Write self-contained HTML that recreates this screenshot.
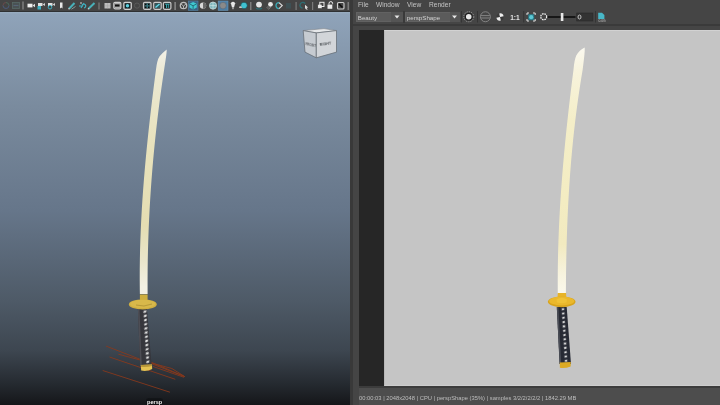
<!DOCTYPE html>
<html><head><meta charset="utf-8">
<style>
*{margin:0;padding:0;box-sizing:border-box}
body *{will-change:transform}
html,body{width:720px;height:405px;overflow:hidden;background:#454545;font-family:"Liberation Sans",sans-serif}
.abs{position:absolute}
#tb{left:0;top:0;width:350px;height:12px;background:#444;border-bottom:1.5px solid #2f3133}
#vp{left:0;top:11.5px;width:350px;height:394px;overflow:hidden;
background:linear-gradient(to bottom,#9aaec2 0px,#8fa3b9 2px,#7a8b9e 94px,#66768a 199px,#4e5a67 289px,#3d4650 339px,#252a30 372px,#141518 394px)}
#div{left:350px;top:0;width:2.5px;height:405px;background:#393939}
#rp{left:352.5px;top:0;width:368px;height:405px;background:#454545}
.menu{top:-0.5px;height:10px;font-size:6.6px;color:#c4c4c4;line-height:9px}
#img{left:384px;top:30px;width:336px;height:356px;background:#c5c5c5;border-top:1px solid #d2d2d2;border-left:1px solid #b8b8b8;border-bottom:1px solid #cdcdcd}
#dark{left:359px;top:30px;width:25px;height:356px;background:#262626}
#status{left:359px;top:386px;width:361px;height:19px;background:#4d4d4d;border-top:2px solid #3c3c3c}
#stxt{left:359px;top:394.5px;font-size:5.8px;color:#bdbdbd;white-space:nowrap;line-height:7px}
.dd{top:11.75px;height:10px;background:#5b5b5b;border:1px solid #626262}
.ddt{font-size:6.2px;color:#d2d2d2;line-height:8px;padding-left:0.8px;padding-top:1px;white-space:nowrap}
.dda{top:11.75px;height:10px;background:#545454}
</style></head><body>
<div id="tb" class="abs"></div>
<div id="vp" class="abs"></div>
<div id="div" class="abs"></div>
<div id="rp" class="abs"></div>
<div class="abs" style="left:352.5px;top:23.5px;width:368px;height:2px;background:#3a3a3a"></div>
<div class="abs menu" style="left:358px">File</div>
<div class="abs menu" style="left:376px">Window</div>
<div class="abs menu" style="left:407px">View</div>
<div class="abs menu" style="left:429px">Render</div>
<!-- dropdowns -->
<div class="abs dd" style="left:356px;width:47px"><div class="ddt">Beauty</div></div>
<div class="abs dda" style="left:391px;width:11.5px"></div>
<div class="abs" style="left:402.75px;top:11px;width:2px;height:12px;background:#3a3a3a"></div>
<div class="abs dd" style="left:405px;width:55px"><div class="ddt">perspShape</div></div>
<div class="abs dda" style="left:449.5px;width:10px"></div>
<div id="dark" class="abs"></div>
<div id="img" class="abs"></div>
<div id="status" class="abs"></div>
<div id="stxt" class="abs">00:00:03 | 2048x2048 | CPU | perspShape (35%) | samples 3/2/2/2/2/2 | 1842.29 MB</div>

<svg class="abs" style="left:0;top:0" width="720" height="405" viewBox="0 0 720 405">
<defs>
<linearGradient id="vblade" x1="0" y1="0" x2="0" y2="1">
<stop offset="0" stop-color="#f2f1e8"/><stop offset="0.1" stop-color="#ebe8d2"/><stop offset="0.4" stop-color="#e8e2bc"/><stop offset="0.72" stop-color="#e4ddb2"/><stop offset="0.86" stop-color="#e9e5ca"/><stop offset="0.97" stop-color="#f3f1e4"/><stop offset="1" stop-color="#f3f1e4"/>
</linearGradient>
<linearGradient id="rblade" x1="0" y1="0" x2="0" y2="1">
<stop offset="0" stop-color="#fbf9f0"/><stop offset="0.1" stop-color="#f7f3dc"/><stop offset="0.3" stop-color="#f4eec8"/><stop offset="0.62" stop-color="#f3ecc2"/><stop offset="0.8" stop-color="#f2eac0"/><stop offset="0.92" stop-color="#f7f3de"/><stop offset="1" stop-color="#fbf9ec"/>
</linearGradient>
</defs>
<!-- ===== left toolbar icons ===== -->
<g fill="none" stroke-width="1">
<path d="M3,5.5 A3,3 0 0 1 6,2.5" stroke="#6a4a4a"/><path d="M6,2.5 A3,3 0 0 1 9,5.5" stroke="#4a6a5a"/><path d="M9,5.5 A3,3 0 0 1 3,5.5" stroke="#4a5a7a"/>
<rect x="12.5" y="2.5" width="7" height="6" fill="#4a5254" stroke="#586a68" stroke-width="0.8"/><path d="M13.5,5.5 H18.5" stroke="#5a6a80" stroke-width="0.8"/>
<rect x="22.5" y="1.5" width="1" height="8" fill="#9a9a9a" stroke="none"/>
<!-- cameras -->
<rect x="27.5" y="3.7" width="5" height="3.7" fill="#f0f0f0" stroke="none"/>
<path d="M32.5,5.5 L35,3.8 L35,7.2 Z" fill="#e0e0e0" stroke="none"/>
<rect x="38" y="3" width="4.5" height="3" fill="#e0e0e0" stroke="none"/>
<path d="M42.5,4.5 L45,3 L45,6 Z" fill="#d0d0d0" stroke="none"/>
<rect x="37.5" y="6" width="3.5" height="3.5" fill="#3fb0c0" stroke="none"/>
<rect x="48" y="3" width="4.5" height="3" fill="#e0e0e0" stroke="none"/>
<path d="M52.5,4.5 L55,3 L55,6 Z" fill="#d0d0d0" stroke="none"/>
<circle cx="50" cy="7.2" r="1.8" stroke="#3fb0c0"/>
<path d="M60,2.5 L62.5,2.5 L62.5,8.5 L61.25,7.5 L60,8.5 Z" fill="#e8e8e8" stroke="none"/>
<!-- pens -->
<path d="M69,8.8 L74.5,3" stroke="#48b0b8" stroke-width="2"/><circle cx="69" cy="8.8" r="0.8" fill="#ccc" stroke="none"/>
<path d="M71.5,9.2 L75.5,6.5" stroke="#8aa0a0" stroke-width="0.9"/>
<path d="M79,6 L83,6 M84,3 L81,8 M82,5 A2,2 0 1 1 84,8" stroke="#3fb0c0" stroke-width="1.2"/>
<circle cx="81" cy="3" r="0.8" fill="#e0e0e0" stroke="none"/>
<path d="M88.5,8.8 L94.5,3" stroke="#48b0b8" stroke-width="2"/><circle cx="88.5" cy="8.8" r="0.8" fill="#ccc" stroke="none"/>
<rect x="98.5" y="2.5" width="1" height="7" fill="#888" stroke="none"/>
<!-- grid & frames -->
<rect x="104.5" y="3" width="6" height="5.5" fill="#bdbdbd" stroke="none"/>
<path d="M107.5,3 V8.5 M104.5,5.75 H110.5" stroke="#a0a0a0" stroke-width="0.4"/>
<rect x="113.8" y="2.3" width="7" height="6.5" rx="1.2" stroke="#cfcfcf" stroke-width="1.2"/>
<rect x="114.5" y="3" width="5.6" height="5" fill="#b0b0b0" stroke="none"/><rect x="115" y="4.4" width="4.6" height="2.2" fill="#111" stroke="none"/>
<rect x="123.8" y="2.3" width="7.5" height="7" rx="1.2" stroke="#cfcfcf" stroke-width="1.2"/>
<rect x="125" y="3.5" width="5" height="4.6" fill="#0c2428" stroke="none"/>
<circle cx="127.5" cy="5.8" r="1.7" fill="#5fd0e0" stroke="none"/>
<circle cx="137" cy="5.6" r="2.6" stroke="#5a5a5a" stroke-width="1"/>
<rect x="143.5" y="2.3" width="7.5" height="7" rx="1.2" stroke="#c8c8c8" stroke-width="1.2"/>
<rect x="144.8" y="3.5" width="5" height="4.6" fill="#3a7880" stroke="none"/>
<path d="M145,3.7 h1.5 v1.5 h-1.5z M148,3.7 h1.5 v1.5 h-1.5z M145,6.5 h1.5 v1.5 h-1.5z M148,6.5 h1.5 v1.5 h-1.5z" fill="#0a0a0a" stroke="none"/>
<rect x="153.7" y="2.3" width="7.5" height="7" rx="1.2" stroke="#c8c8c8" stroke-width="1.2"/>
<rect x="154.9" y="3.5" width="5" height="4.6" fill="#2a5a60" stroke="none"/>
<path d="M155.5,7.5 L159.5,4" stroke="#6ad8e8" stroke-width="1.3"/>
<rect x="163.4" y="2.3" width="7.5" height="7" rx="1.2" stroke="#c8c8c8" stroke-width="1.2"/>
<rect x="164.6" y="3.5" width="5" height="4.6" fill="#0a1a1c" stroke="none"/>
<path d="M165,4.2 H169.5 M166.5,4.2 V8 M168.3,4.2 V8" stroke="#40b0b8" stroke-width="0.9"/>
<rect x="174.5" y="2" width="1.2" height="8" fill="#9a9a9a" stroke="none"/>
<!-- shading -->
<circle cx="183.5" cy="5.5" r="3.2" stroke="#bcbcbc" stroke-width="1.3"/>
<path d="M181,4 L183.5,6 L186,4 M183.5,6 V8.6" stroke="#bcbcbc" stroke-width="0.9"/>
<rect x="188.3" y="1" width="9.7" height="9.3" fill="#3b6283" stroke="#5486ab" stroke-width="0.6"/>
<path d="M193.1,2 L196.8,3.8 L196.8,7.6 L193.1,9.4 L189.4,7.6 L189.4,3.8 Z" fill="#3fc8d0" stroke="none"/>
<path d="M189.6,3.9 L193.1,5.8 L196.6,3.9 M193.1,5.8 V9.2" stroke="#1a4a58" stroke-width="0.7"/>
<circle cx="203" cy="5.6" r="3.2" fill="#d8d8d8" stroke="none"/>
<path d="M203,2.4 A3.2,3.2 0 0 1 203,8.8 Z" fill="#6a6a6a" stroke="none"/>
<circle cx="213" cy="5.6" r="3.6" fill="#7fb8bf" stroke="#c8d8da" stroke-width="0.8"/>
<path d="M209.5,5.6 H216.5 M213,2 V9.2" stroke="#d8e8ea" stroke-width="0.6"/>
<rect x="218.2" y="1" width="9.8" height="9.3" fill="#4d7ea4" stroke="#6896bb" stroke-width="0.6"/>
<circle cx="223" cy="5.6" r="3.3" fill="#8a8a8a" stroke="#5a6a7a" stroke-width="0.6"/>
<!-- light bulb -->
<path d="M231.2,4.5 A2,2 0 1 1 234.8,4.5 L234,7.5 L232,7.5 Z" fill="#e8e8e8" stroke="none"/>
<rect x="232.2" y="7.8" width="1.6" height="1.4" fill="#aaa" stroke="none"/>
<path d="M229.8,3 L230.6,3.6 M236.2,3 L235.4,3.6" stroke="#bbb" stroke-width="0.6"/>
<circle cx="244" cy="5.5" r="3.3" fill="#3fc0d0" stroke="#1a3a40" stroke-width="0.6"/>
<ellipse cx="240.5" cy="7.2" rx="1.5" ry="0.9" fill="#c8c8c8" stroke="none"/>
<rect x="250.2" y="2" width="1.2" height="8" fill="#8a8a8a" stroke="none"/>
<circle cx="259" cy="4.6" r="2.9" fill="#e4e4e4" stroke="none"/>
<path d="M256,8.2 Q259,9.8 262,8.2" stroke="#2a7078" stroke-width="1.1"/>
<path d="M266.5,8 L269,5.5 M267.5,9 L270,6.5 M268.5,9.6 L271,7" stroke="#7a7a7a" stroke-width="0.9"/>
<circle cx="270.5" cy="4.3" r="2.4" fill="#e8e8e8" stroke="none"/>
<path d="M279,2.6 A3,3 0 0 0 279,8.6" stroke="#3aa8b4" stroke-width="1.3"/>
<path d="M279,2.6 L282.2,5.6 L279,8.6" stroke="#d8d8d8" stroke-width="1.2"/>
<rect x="286" y="3" width="5" height="5.5" fill="#3e5054" stroke="none"/>
<rect x="295.5" y="2" width="1.2" height="8" fill="#7a7a7a" stroke="none"/>
<path d="M305.2,3.6 A2.9,2.9 0 1 0 302.6,8.2" stroke="#2e6e74" stroke-width="1.3"/>
<path d="M305,4.8 L308.2,7.6 L306.6,7.8 L307.6,9.6 L306.8,9.9 L305.8,8.2 L305,9.2 Z" fill="#e0e0e0" stroke="none"/>
<rect x="312" y="2" width="1.2" height="8" fill="#7a7a7a" stroke="none"/>
<rect x="317.8" y="4.3" width="4.2" height="4.2" fill="#ececec" stroke="#333" stroke-width="0.5"/>
<rect x="319.8" y="2.3" width="4.2" height="4.2" stroke="#ececec" stroke-width="1"/>
<rect x="327.5" y="4.6" width="4.8" height="4.2" fill="#ececec" stroke="none"/>
<path d="M329,4.6 V3.4 A1.8,1.8 0 0 1 332.6,3.4 V4.2" stroke="#ececec" stroke-width="1"/>
<rect x="337.5" y="2.5" width="6.5" height="6.5" rx="1" stroke="#cfcfcf" stroke-width="1.1"/>
<path d="M339,4 L342.5,7.5" stroke="#0a0a0a" stroke-width="1.6"/>
<rect x="347.6" y="2" width="1.2" height="8" fill="#8a8a8a" stroke="none"/>
</g>

<!-- ===== view cube ===== -->
<g>
<path d="M303.2,30.6 L316.3,32.9 L336.5,30.6 L324,28.6 Z" fill="#e6e8ea" stroke="#7a8086" stroke-width="0.6"/>
<path d="M303.2,30.6 L316.3,32.9 L316.3,57.8 L305,52.1 Z" fill="#c6cbd1" stroke="#60676e" stroke-width="0.7"/>
<path d="M316.3,32.9 L336.5,30.6 L336.5,52.1 L316.3,57.8 Z" fill="#d2d5d9" stroke="#60676e" stroke-width="0.7"/>
<text x="305.4" y="45.8" font-size="3.1" fill="#5a5e63" font-family="Liberation Sans" font-weight="bold" transform="rotate(12 310 44)">FRONT</text>
<text x="319.8" y="45.4" font-size="3.7" fill="#4e5256" font-family="Liberation Sans" font-weight="bold" transform="rotate(-8 327 45)">RIGHT</text>
</g>

<!-- ===== viewport sword ===== -->
<g>
<g stroke="#8c3a1c" stroke-width="0.9" fill="none" opacity="0.95">
<path d="M106.1,346.1 L184.8,376.6"/>
<path d="M118.3,354.2 L171.9,368.5 L184.8,376.6"/>
<path d="M109.5,357 L175.3,379.3"/>
<path d="M102.7,370.5 L169.9,392.2"/>
<path d="M151.6,362.4 L184.8,376.6"/>
<path d="M153,366.5 L184,377.3"/>
</g>
<path d="M166.7,49.4 Q162.6,52.6 159.6,56.2 Q157,60 155.92,70 L155.92,70.00 L154.62,80.00 L153.35,90.00 L152.12,100.00 L150.92,110.00 L149.77,120.00 L148.65,130.00 L147.59,140.00 L146.58,150.00 L145.62,160.00 L144.72,170.00 L143.88,180.00 L143.11,190.00 L142.40,200.00 L141.78,210.00 L141.22,220.00 L140.75,230.00 L140.36,240.00 L140.06,250.00 L139.86,260.00 L139.74,270.00 L139.73,280.00 L139.82,290.00 L139.88,294.00 L147.62,294.00 L147.60,290.00 L147.58,280.00 L147.65,270.00 L147.78,260.00 L147.99,250.00 L148.28,240.00 L148.64,230.00 L149.07,220.00 L149.57,210.00 L150.15,200.00 L150.80,190.00 L151.52,180.00 L152.31,170.00 L153.17,160.00 L154.10,150.00 L155.11,140.00 L156.18,130.00 L157.32,120.00 L158.53,110.00 L159.81,100.00 L161.16,90.00 L162.58,80.00 L164.06,70.00 Q165.6,60 166.3,55 Q166.8,51 166.7,49.4 Z" fill="url(#vblade)"/>
<path d="M139.9,294.5 L147.6,294.5 L147.6,300 L139.9,300 Z" fill="#cdae3e"/>
<path d="M137.9,309 L147,309 L151.6,366 L140.2,366 Z" fill="#36363c"/>
<path d="M137.9,309 L139.5,309 L141.8,366 L140.2,366 Z" fill="#4e4e55"/>
<g fill="#e6e6e6"><ellipse cx="144.98" cy="311.70" rx="1.75" ry="1.1" transform="rotate(-30 144.98 311.70)"/><ellipse cx="145.22" cy="315.88" rx="1.75" ry="1.1" transform="rotate(-30 145.22 315.88)"/><ellipse cx="145.45" cy="320.05" rx="1.75" ry="1.1" transform="rotate(-30 145.45 320.05)"/><ellipse cx="145.68" cy="324.23" rx="1.75" ry="1.1" transform="rotate(-30 145.68 324.23)"/><ellipse cx="145.92" cy="328.40" rx="1.75" ry="1.1" transform="rotate(-30 145.92 328.40)"/><ellipse cx="146.15" cy="332.57" rx="1.75" ry="1.1" transform="rotate(-30 146.15 332.57)"/><ellipse cx="146.39" cy="336.75" rx="1.75" ry="1.1" transform="rotate(-30 146.39 336.75)"/><ellipse cx="146.62" cy="340.93" rx="1.75" ry="1.1" transform="rotate(-30 146.62 340.93)"/><ellipse cx="146.85" cy="345.10" rx="1.75" ry="1.1" transform="rotate(-30 146.85 345.10)"/><ellipse cx="147.09" cy="349.27" rx="1.75" ry="1.1" transform="rotate(-30 147.09 349.27)"/><ellipse cx="147.32" cy="353.45" rx="1.75" ry="1.1" transform="rotate(-30 147.32 353.45)"/><ellipse cx="147.56" cy="357.62" rx="1.75" ry="1.1" transform="rotate(-30 147.56 357.62)"/><ellipse cx="147.79" cy="361.80" rx="1.75" ry="1.1" transform="rotate(-30 147.79 361.80)"/></g>
<ellipse cx="142.8" cy="304.4" rx="13.9" ry="5" fill="#cfae40"/>
<ellipse cx="142.8" cy="303.9" rx="12.6" ry="4.2" fill="#d8b84a"/>
<path d="M136,305 Q144,307.5 152,304" stroke="#a0842e" stroke-width="0.6" fill="none"/>
<path d="M140.8,365 L152,364.5 L152.2,369 Q147,371.8 141.2,370.6 Z" fill="#e4c152"/>
<path d="M140.8,365 L152,364.5 L152.1,366 Q147,367.4 140.9,366.8 Z" fill="#b89638"/>
<rect x="146" y="398.3" width="17" height="8" rx="2.5" fill="#111316"/>
<text x="147" y="404" font-size="5.6" font-weight="bold" fill="#f4f4f4" font-family="Liberation Sans" stroke="#111" stroke-width="0.3" paint-order="stroke">persp</text>
</g>
<!-- ===== render sword ===== -->
<g>
<path d="M584.7,47.4 Q579.2,50.2 576.4,55.2 Q574.2,60 573.46,70 L573.46,70.00 L572.19,80.00 L570.95,90.00 L569.75,100.00 L568.60,110.00 L567.49,120.00 L566.42,130.00 L565.40,140.00 L564.44,150.00 L563.52,160.00 L562.67,170.00 L561.87,180.00 L561.13,190.00 L560.46,200.00 L559.86,210.00 L559.32,220.00 L558.86,230.00 L558.47,240.00 L558.16,250.00 L557.93,260.00 L557.78,270.00 L557.72,280.00 L557.74,290.00 L557.77,293.50 L565.90,293.50 L565.91,290.00 L565.98,280.00 L566.10,270.00 L566.27,260.00 L566.48,250.00 L566.75,240.00 L567.08,230.00 L567.47,220.00 L567.92,210.00 L568.44,200.00 L569.03,190.00 L569.68,180.00 L570.42,170.00 L571.23,160.00 L572.13,150.00 L573.11,140.00 L574.18,130.00 L575.34,120.00 L576.59,110.00 L577.94,100.00 L579.40,90.00 L580.95,80.00 L582.61,70.00 Q583.9,60 584.4,55 Q584.9,50.5 584.7,47.4 Z" fill="url(#rblade)"/>
<path d="M557.8,293 L566.1,293 L566.3,298 L557.6,298 Z" fill="#e8b428"/>
<path d="M556.8,307 L566.7,307 L571,364 L559.6,364 Z" fill="#272a34"/>
<path d="M556.8,307 L558.4,307 L561.2,364 L559.6,364 Z" fill="#4a4d56"/>
<g fill="#e2e2e2"><ellipse cx="562.97" cy="309.20" rx="1.45" ry="1.05" transform="rotate(-22 562.97 309.20)"/><ellipse cx="563.23" cy="313.50" rx="1.45" ry="1.05" transform="rotate(-22 563.23 313.50)"/><ellipse cx="563.49" cy="317.80" rx="1.45" ry="1.05" transform="rotate(-22 563.49 317.80)"/><ellipse cx="563.74" cy="322.10" rx="1.45" ry="1.05" transform="rotate(-22 563.74 322.10)"/><ellipse cx="564.00" cy="326.40" rx="1.45" ry="1.05" transform="rotate(-22 564.00 326.40)"/><ellipse cx="564.25" cy="330.70" rx="1.45" ry="1.05" transform="rotate(-22 564.25 330.70)"/><ellipse cx="564.51" cy="335.00" rx="1.45" ry="1.05" transform="rotate(-22 564.51 335.00)"/><ellipse cx="564.77" cy="339.30" rx="1.45" ry="1.05" transform="rotate(-22 564.77 339.30)"/><ellipse cx="565.02" cy="343.60" rx="1.45" ry="1.05" transform="rotate(-22 565.02 343.60)"/><ellipse cx="565.28" cy="347.90" rx="1.45" ry="1.05" transform="rotate(-22 565.28 347.90)"/><ellipse cx="565.54" cy="352.20" rx="1.45" ry="1.05" transform="rotate(-22 565.54 352.20)"/><ellipse cx="565.79" cy="356.50" rx="1.45" ry="1.05" transform="rotate(-22 565.79 356.50)"/><ellipse cx="566.05" cy="360.80" rx="1.45" ry="1.05" transform="rotate(-22 566.05 360.80)"/></g>
<ellipse cx="561.7" cy="301.8" rx="13.8" ry="5.4" fill="#d8a41c"/>
<ellipse cx="561.7" cy="301" rx="12.6" ry="4.4" fill="#eab82c"/>
<path d="M556.5,299.5 Q561.7,296 567,299.5 L566.5,302.5 Q561.7,304 557,302.5 Z" fill="#f0c236"/>
<path d="M559.8,362.5 L570.8,362 L570.6,366.5 Q565,368.8 559.9,367.8 Z" fill="#dcaa24"/>
</g>
<!-- ===== render toolbar icons ===== -->
<g fill="none">
<rect x="461" y="11" width="1" height="11.5" fill="#353535"/>
<circle cx="468.75" cy="16.75" r="5" stroke="#9a9a9a" stroke-width="1" stroke-dasharray="1.3 1"/>
<circle cx="468.75" cy="16.75" r="3.4" fill="#e8e8e8" stroke="#1e1e1e" stroke-width="1.2"/>
<rect x="477" y="11" width="1" height="11.5" fill="#353535"/>
<circle cx="485.4" cy="16.75" r="5" stroke="#8a8a8a" stroke-width="0.9"/>
<path d="M481,15.6 H489.8 M481,18 H489.8" stroke="#8a8a8a" stroke-width="0.9"/>
<circle cx="500" cy="17" r="3.6" fill="#3a3a3a"/>
<path d="M500,17 L499.2,13.5 A3.6,3.6 0 0 1 503.6,16.2 Z M500,17 L500.8,20.5 A3.6,3.6 0 0 1 496.4,17.8 Z" fill="#f0f0f0"/>
<text x="510.2" y="19.8" font-size="6.6" font-weight="bold" fill="#e6e6e6" font-family="Liberation Sans">1:1</text>
<rect x="523.2" y="11" width="1" height="11.5" fill="#353535"/>
<rect x="528.2" y="14.2" width="6" height="6" fill="#2c7c88"/><circle cx="531.2" cy="17.2" r="2.1" fill="#5cc8d4"/>
<path d="M527,15 V13 H529 M533,13 H535.2 V15 M535.2,19 V21 H533 M529,21 H527 V19" stroke="#e0e0e0" stroke-width="1"/>
<circle cx="543.75" cy="16.75" r="3" stroke="#f0f0f0" stroke-width="1.3" stroke-dasharray="1.6 0.8"/>
<path d="M547.5,17 H575.5" stroke="#0c0c0c" stroke-width="1.6"/>
<rect x="560.8" y="13" width="2.6" height="8" fill="#e8e8e8"/>
<rect x="576.7" y="13" width="16.2" height="8" fill="#333" stroke="#2a2a2a" stroke-width="0.6"/>
<ellipse cx="579.5" cy="17" rx="1.5" ry="2" stroke="#d0d0d0" stroke-width="0.9"/>
<rect x="595" y="11" width="1" height="11.5" fill="#353535"/>
<path d="M598.2,12.8 H602 L604.4,15 V19 H598.2 Z" fill="#48b8c8"/>
<text x="598.4" y="21.8" font-size="3.4" fill="#c8c8c8" font-family="Liberation Sans">0.0G</text>
<path d="M394.5,15.5 L399.5,15.5 L397,18.5 Z" fill="#e8e8e8"/>
<path d="M452,15.5 L457,15.5 L454.5,18.5 Z" fill="#e8e8e8"/>
</g>
</svg>
</body></html>
